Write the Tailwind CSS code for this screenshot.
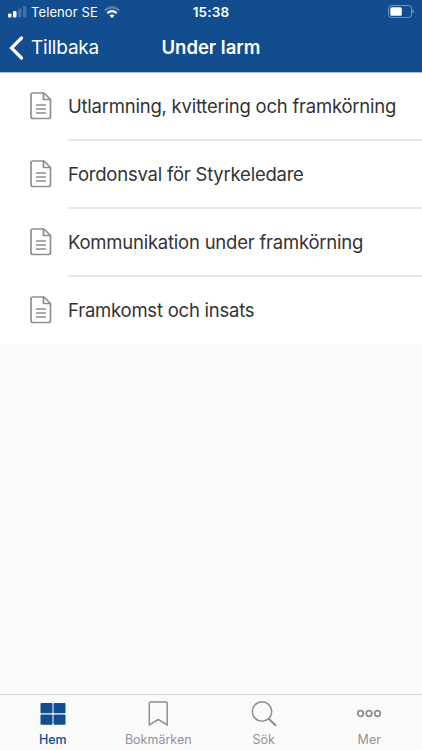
<!DOCTYPE html>
<html lang="sv">
  <head>
    <meta charset="UTF-8" />
    <meta name="viewport" content="width=device-width, initial-scale=1.0" />
    <title>Under larm</title>
    <script src="https://cdn.jsdelivr.net/npm/@tailwindcss/browser@4"></script>
  </head>
  <body class="font-['Inter',sans-serif]">
    <!-- shared document icon -->
    <svg class="hidden">
      <symbol id="doc" viewBox="0 0 22 28">
        <path d="M3 1H14L20.500 7.500V24.500Q20.500 26.500 18.500 26.500H3Q1 26.500 1 24.500V3Q1 1 3 1ZM13.500 1V7.500H20.500M6 13H16M6 17H16M6 21H16" />
      </symbol>
    </svg>
    <div class="flex flex-col w-[422px] h-[750px] bg-[#fafafa] overflow-hidden">
      <header class="h-[72px] shrink-0 bg-[#114d8f] text-white">
        <div class="grid grid-cols-3 items-center h-6 px-2">
          <div class="flex items-center text-[13px] whitespace-nowrap">
            <svg class="w-[19px] h-3 mr-1" viewBox="0 0 19 12" fill="#fff">
              <rect x="0" y="7.500" width="3.5" height="4" rx="1" />
              <rect x="5" y="5" width="3.5" height="6.500" rx="1" />
              <rect x="10" y="2.500" width="3.5" height="9" rx="1" opacity=".2" />
              <rect x="15" y="0" width="3.500" height="11.500" rx="1" opacity=".2" />
            </svg>
            <span class="pt-px tracking-[0.100px]">Telenor SE</span>
            <svg class="w-4 h-3 ml-1.5" viewBox="0 0 16 12" fill="none" stroke="#fff" stroke-width="2.200">
              <path d="M.8 4.500Q8-2 15.200 4.500" opacity=".3" />
              <path d="M3.300 7.300Q8 3 12.700 7.300" />
              <path d="M8 12 5.500 9.500Q8 7.500 10.500 9.500Z" fill="#fff" stroke="none" />
            </svg>
          </div>
          <p class="text-center text-[13.500px] font-semibold tracking-[0.200px]">15:38</p>
          <div class="flex justify-end">
            <svg class="w-[27px] h-[13px] -mt-0.5" viewBox="0 0 27 13" fill="none">
              <rect x="1.500" y=".5" width="23" height="12" rx="3" stroke="#fff" stroke-opacity=".4" />
              <rect x="3.300" y="2.300" width="11.500" height="8.400" rx="1.5" fill="#fff" />
              <path d="M25.500 4.500v4q1.500-.6 1.500-2t-1.500-2" fill="#fff" fill-opacity=".4" />
            </svg>
          </div>
        </div>
        <div class="grid grid-cols-3 items-center h-12 px-2">
          <a class="flex items-center gap-2 text-[19px] tracking-[-0.200px]">
            <svg class="w-[15px] h-6 -mt-px" viewBox="0 0 15 24" fill="none" stroke="#fff" stroke-width="3.200" stroke-linecap="round">
              <path d="M13.500 2 3.500 12l10 10" />
            </svg>
            Tillbaka
          </a>
          <h1 class="text-center text-[18.500px] font-semibold">Under larm</h1>
        </div>
      </header>

      <ul class="bg-white text-[#333] text-[18.500px] tracking-[-0.230px] whitespace-nowrap border-t border-[#a9bdd4]">
        <li class="flex h-[67px] pl-[30px]">
          <svg class="w-[22px] h-7 mt-[19px] mr-4 shrink-0 fill-none stroke-[#8e8e93] stroke-[1.700]"><use href="#doc" /></svg>
          <div class="flex-1 flex items-center pt-0.5 -mb-px border-b-2 border-[#e8e8ea]">Utlarmning, kvittering och framkörning</div>
        </li>
        <li class="flex h-[68px] pl-[30px]">
          <svg class="w-[22px] h-7 mt-5 mr-4 shrink-0 fill-none stroke-[#8e8e93] stroke-[1.700]"><use href="#doc" /></svg>
          <div class="flex-1 flex items-center pt-[3px] -mb-px border-b-2 border-[#e8e8ea]">Fordonsval för Styrkeledare</div>
        </li>
        <li class="flex h-[68px] pl-[30px]">
          <svg class="w-[22px] h-7 mt-5 mr-4 shrink-0 fill-none stroke-[#8e8e93] stroke-[1.700]"><use href="#doc" /></svg>
          <div class="flex-1 flex items-center pt-[3px] -mb-px border-b-2 border-[#e8e8ea]">Kommunikation under framkörning</div>
        </li>
        <li class="flex h-[68px] pl-[30px]">
          <svg class="w-[22px] h-7 mt-5 mr-4 shrink-0 fill-none stroke-[#8e8e93] stroke-[1.700]"><use href="#doc" /></svg>
          <div class="flex-1 flex items-center pt-0.5">Framkomst och insats</div>
        </li>
      </ul>

      <nav class="mt-auto grid grid-cols-4 h-14 border-t border-[#d4d4d6] text-[12.500px] leading-4 text-[#929297]">
        <a class="flex flex-col items-center gap-1 pt-[5px] text-[#114d8f] font-medium tracking-[-0.100px]">
          <svg class="w-7 h-7" viewBox="0 0 28 28" fill="#114d8f">
            <rect x="1.500" y="3" width="12" height="10.300" rx="1" />
            <rect x="14.500" y="3" width="12" height="10.300" rx="1" />
            <rect x="1.500" y="14.500" width="12" height="10.300" rx="1" />
            <rect x="14.500" y="14.500" width="12" height="10.300" rx="1" />
          </svg>
          Hem
        </a>
        <a class="flex flex-col items-center gap-1 pt-[5px]">
          <svg class="w-7 h-7" viewBox="0 0 28 28" fill="none" stroke="#8e8e93" stroke-width="1.500">
            <path d="M6.300 2Q5.300 2 5.300 3V25L14.300 19.500 23.200 25V3Q23.200 2 22.200 2Z" />
          </svg>
          Bokmärken
        </a>
        <a class="flex flex-col items-center gap-1 pt-[5px]">
          <svg class="w-7 h-7" viewBox="0 0 28 28" fill="none" stroke="#8e8e93" stroke-width="1.500">
            <circle cx="12" cy="11.500" r="9.700" />
            <path d="m18.500 18.500 7.500 7.300" stroke-width="2" />
          </svg>
          Sök
        </a>
        <a class="flex flex-col items-center gap-1 pt-[5px]">
          <svg class="w-7 h-7" viewBox="0 0 28 28" fill="none" stroke="#8e8e93" stroke-width="1.800">
            <circle cx="5.500" cy="13.500" r="2.800" />
            <circle cx="14" cy="13.500" r="2.800" />
            <circle cx="22.500" cy="13.500" r="2.800" />
          </svg>
          Mer
        </a>
      </nav>
    </div>
  </body>
</html>
